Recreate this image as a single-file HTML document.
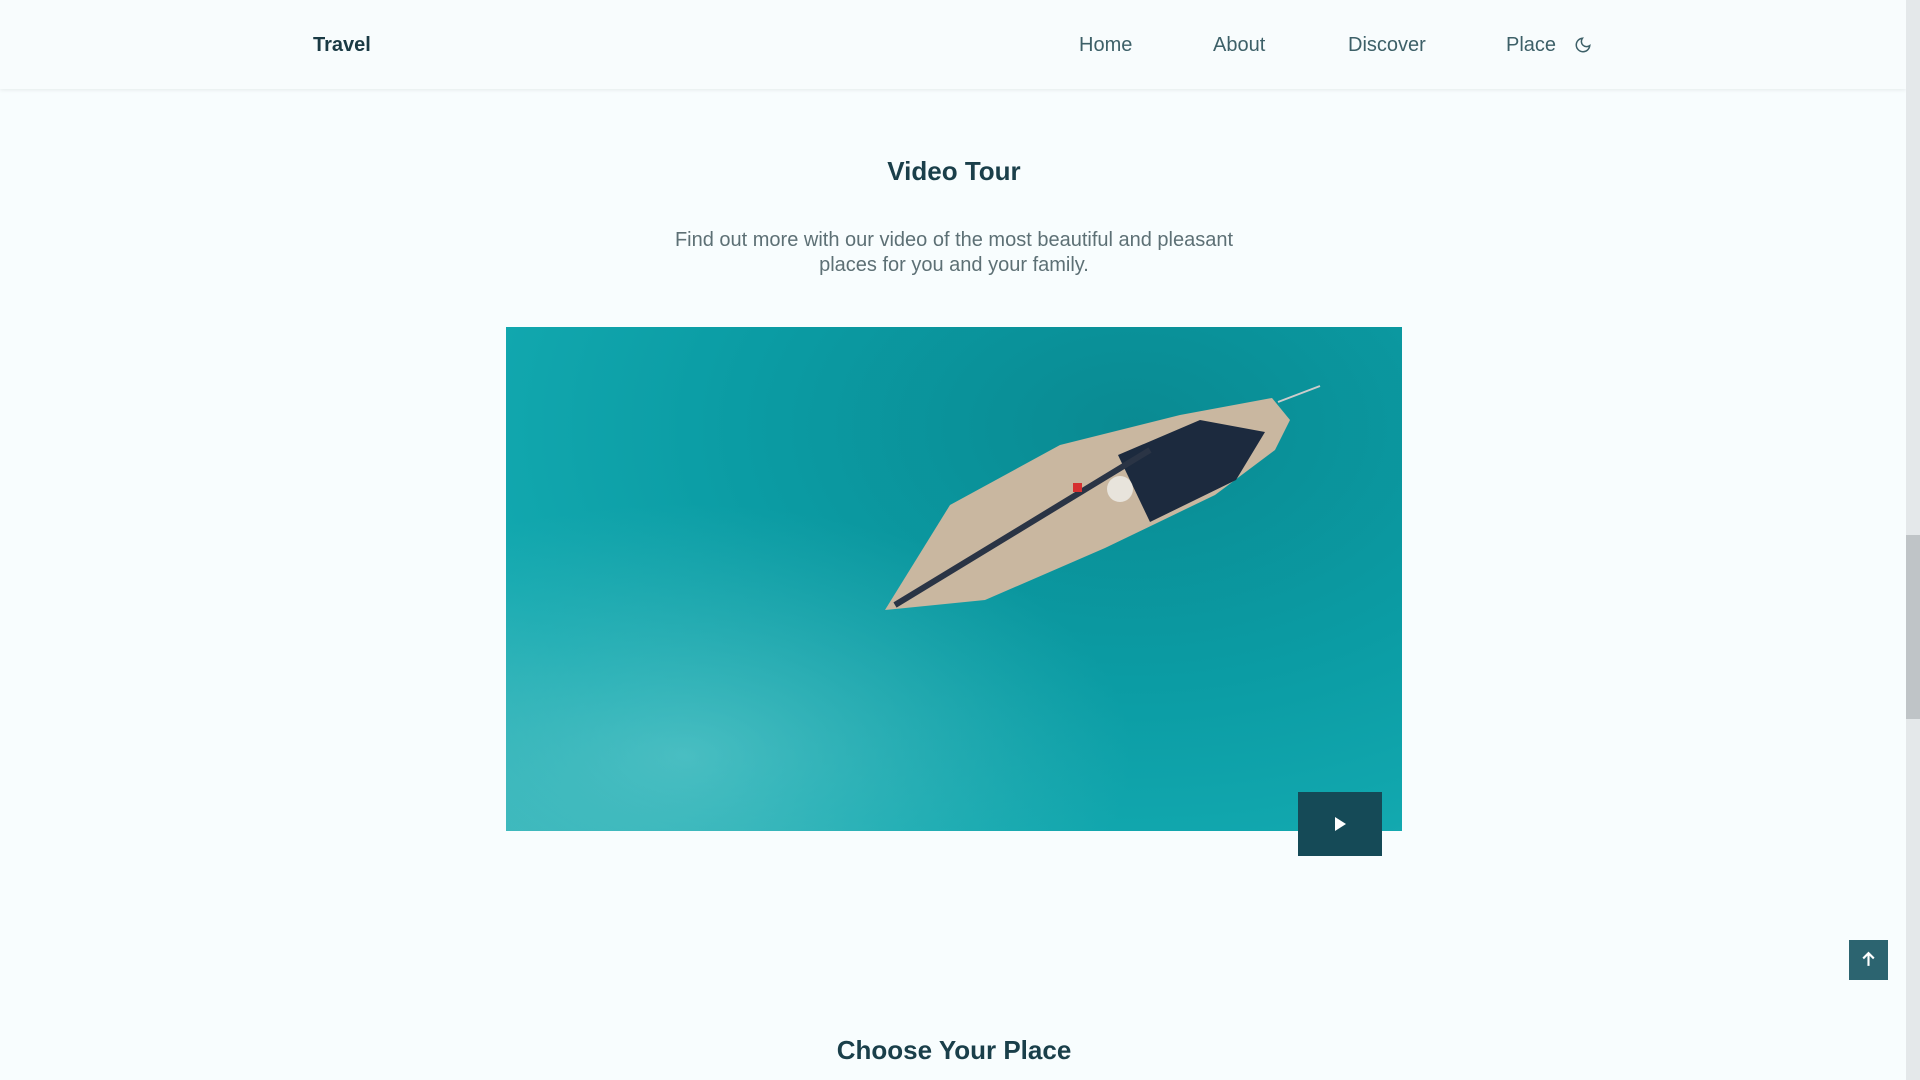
<!DOCTYPE html>
<html><head><meta charset="utf-8"><style>
*{margin:0;padding:0;box-sizing:border-box}
html,body{width:1920px;height:1080px;overflow:hidden;background:#f8fdfe;font-family:"Liberation Sans",sans-serif;color:#1a3f4a}
.hdr{position:absolute;left:0;top:0;width:1906px;height:89px;background:#f8fcfd;box-shadow:0 1px 4px rgba(0,0,0,.08)}
.hdr span{position:absolute;top:34px;font-size:20px;color:#3d6068}
.logo{left:313px;color:#1a3a44!important;font-weight:bold}
.sb{position:absolute;right:0;top:0;width:14px;height:1080px;background:#e4e8ea}
.th{position:absolute;right:0;top:535px;width:14px;height:184px;background:#bfc4c7}
h2{position:absolute;left:0;width:1908px;text-align:center;font-size:26px;font-weight:bold;color:#1a3f4a}
p{position:absolute;left:0;width:1908px;top:228px;text-align:center;font-size:20px;line-height:25px;color:#5d7075}
.img{position:absolute;left:506px;top:327px;width:896px;height:504px;overflow:hidden;background:radial-gradient(ellipse at 70% 20%,#0a8a92,#0b9ca4 45%,#12a8af 75%,#2fb3b8)}
.play{position:absolute;left:1298px;top:792px;width:84px;height:64px;background:#154a57}
.up{position:absolute;left:1849px;top:940px;width:39px;height:40px;background:#2c6470}
</style></head><body>
<div class="hdr">
<span class="logo">Travel</span>
<span style="left:1079px">Home</span>
<span style="left:1213px">About</span>
<span style="left:1348px">Discover</span>
<span style="left:1506px">Place</span>
<svg style="position:absolute;left:1574px;top:36px" width="18" height="18" viewBox="0 0 24 24" fill="none" stroke="#3d6068" stroke-width="2"><path d="M21 12.8A9 9 0 1 1 11.2 3a7 7 0 0 0 9.8 9.8z"/></svg>
</div>
<h2 style="top:156px">Video Tour</h2>
<p>Find out more with our video of the most beautiful and pleasant<br>places for you and your family.</p>
<div class="img">
<svg width="896" height="504" viewBox="506 327 896 504">
<defs><radialGradient id="g" cx="0.2" cy="0.85" r="0.5"><stop offset="0" stop-color="#7fd3d4" stop-opacity=".5"/><stop offset="1" stop-color="#5cc4c6" stop-opacity="0"/></radialGradient></defs>
<rect x="506" y="327" width="896" height="504" fill="url(#g)"/>
<polygon points="885,610 950,505 1060,445 1180,415 1272,398 1290,420 1275,450 1215,495 1105,548 985,600" fill="#c9b7a0"/>
<polygon points="1118,455 1200,420 1265,432 1236,480 1150,522" fill="#1c2a3e"/>
<line x1="895" y1="605" x2="1150" y2="450" stroke="#2a3445" stroke-width="6"/>
<circle cx="1120" cy="489" r="13" fill="#e8e4dc"/>
<rect x="1073" y="483" width="9" height="9" fill="#d63030"/>
<line x1="1278" y1="402" x2="1320" y2="386" stroke="#ccc" stroke-width="2"/>
</svg>
</div>
<div class="play"><svg style="position:absolute;left:34px;top:24px" width="16" height="16" viewBox="0 0 16 16"><polygon points="3,1 14,8 3,15" fill="#fff"/></svg></div>
<div class="up"><svg style="position:absolute;left:11px;top:11px" width="17" height="17" viewBox="0 0 16 16" fill="none" stroke="#fff" stroke-width="2"><path d="M8 14V2M3 7l5-5 5 5"/></svg></div>
<h2 style="top:1035px">Choose Your Place</h2>
<div class="sb"><div class="th"></div></div>
</body></html>
